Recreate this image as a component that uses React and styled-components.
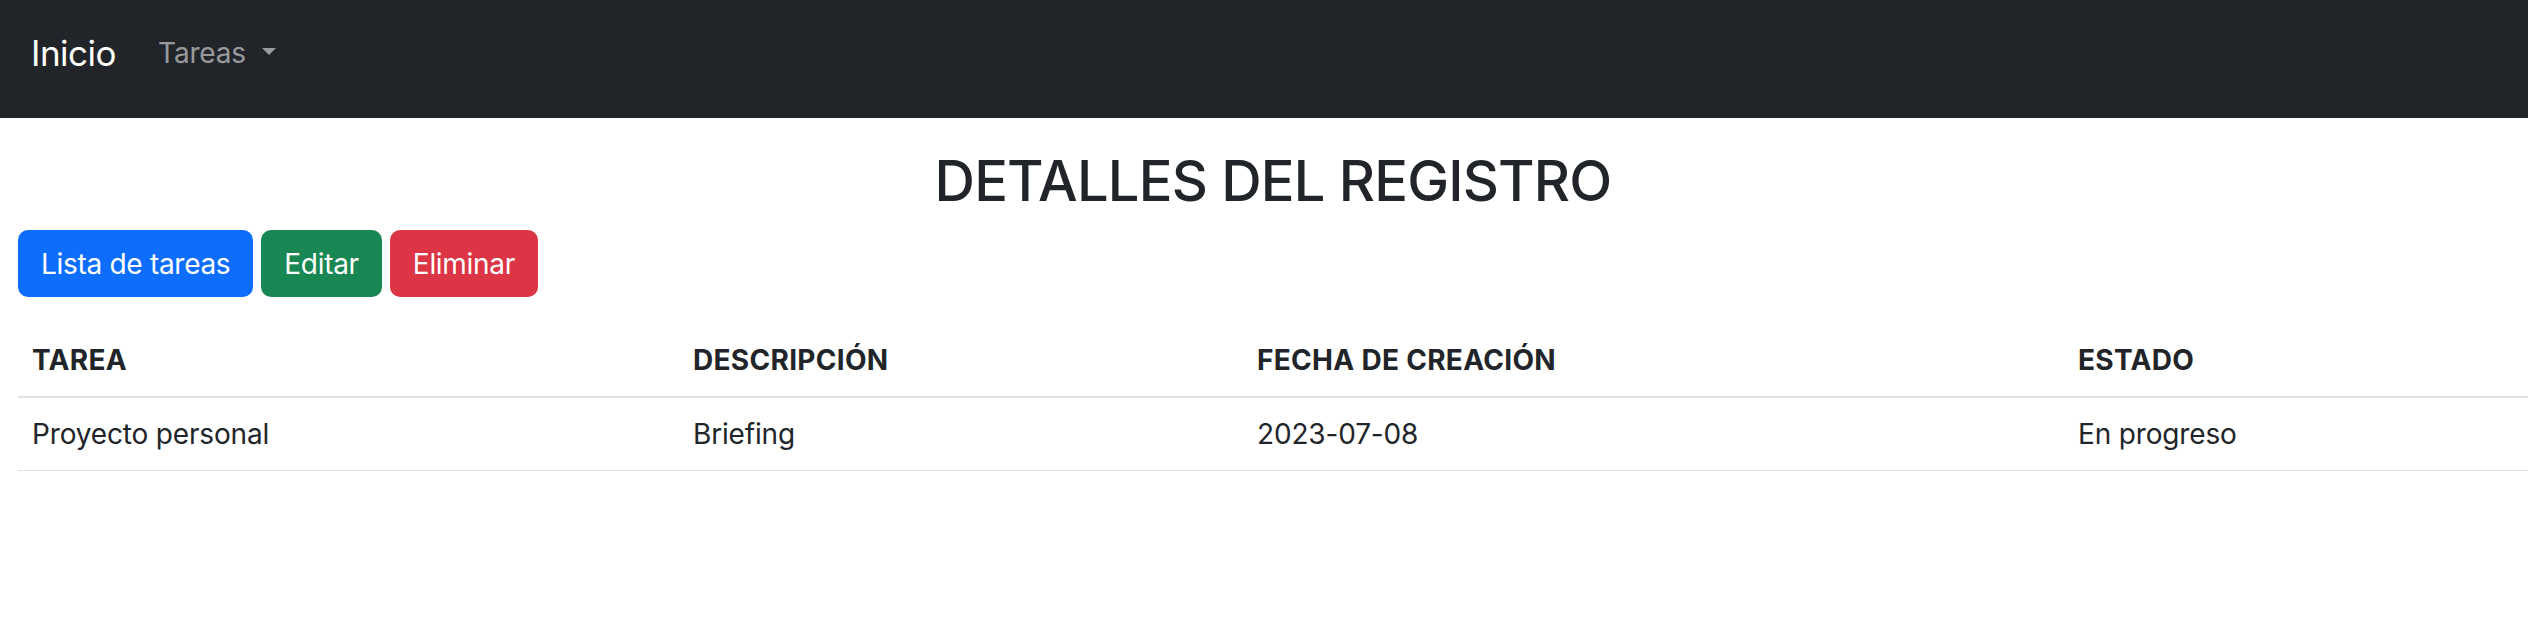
import styled, { createGlobalStyle } from "styled-components";

const GlobalStyle = createGlobalStyle`
    body {
        margin: 0;
        font-family: Inter, "Noto Sans", sans-serif;
        letter-spacing: -0.01em;
        color: #212529;
        background-color: #FFFFFF;
    }
`;

const tasks = [
    { name: "Proyecto personal", description: "Briefing", created: "2023-07-08", status: "En progreso" }
];

export default function App() {
    return (
        <>
            <GlobalStyle />
            <NavBar>
                <Brand>Inicio</Brand>
                <DropdownToggle>Tareas</DropdownToggle>
            </NavBar>
            <Main>
                <Title>DETALLES DEL REGISTRO</Title>
                <Actions>
                    <Button color="#0d6efd">Lista de tareas</Button>
                    <Button color="#198754">Editar</Button>
                    <Button color="#dc3545">Eliminar</Button>
                </Actions>
                <Table>
                    <colgroup>
                        <Col width="661px" />
                        <Col width="564px" />
                        <Col width="821px" />
                        <Col />
                    </colgroup>
                    <thead>
                        <tr>
                            <th>TAREA</th>
                            <th>DESCRIPCIÓN</th>
                            <th>FECHA DE CREACIÓN</th>
                            <th>ESTADO</th>
                        </tr>
                    </thead>
                    <tbody>
                        {tasks.map((task) => (
                            <tr key={task.name}>
                                <td>{task.name}</td>
                                <td>{task.description}</td>
                                <td>{task.created}</td>
                                <td>{task.status}</td>
                            </tr>
                        ))}
                    </tbody>
                </Table>
            </Main>
        </>
    );
}

const NavBar = styled.nav`
    background-color: #212529;
    display: flex;
    align-items: center;
    box-sizing: border-box;
    height: 118px;
    padding: 0 0 12px 31px;
`;

const Brand = styled.a`
    color: #FFFFFF;
    font-size: 35px;
    line-height: 1.5;
    letter-spacing: -0.5px;
    margin-right: 42px;
    cursor: pointer;
`;

const DropdownToggle = styled.a`
    color: rgba(255, 255, 255, 0.55);
    font-size: 28px;
    line-height: 1.5;
    cursor: pointer;

    &::after {
        content: "";
        display: inline-block;
        margin-left: 16px;
        vertical-align: 0.28em;
        border-top: 7.5px solid;
        border-left: 7.5px solid transparent;
        border-right: 7.5px solid transparent;
    }
`;

const Main = styled.main`
    padding-left: 18px;
`;

const Title = styled.h2`
    font-size: 56px;
    font-weight: 500;
    line-height: 1.2;
    letter-spacing: -0.8px;
    text-align: center;
    margin: 30px 0 15px;
`;

const Actions = styled.div`
    display: flex;
    gap: 8px;
`;

const Button = styled.button`
    background-color: ${(props) => props.color};
    color: #FFFFFF;
    font-family: inherit;
    font-size: 28px;
    letter-spacing: -0.3px;
    height: 67px;
    padding: 0 23px;
    border: none;
    border-radius: 10px;
    cursor: pointer;
`;

const Table = styled.table`
    width: 100%;
    margin-top: 27px;
    border-collapse: collapse;
    font-size: 28px;

    th, td {
        text-align: left;
        height: 72px;
        padding: 0 14px;
        border-bottom: 1px solid #dee2e6;
    }

    th {
        font-weight: 700;
        letter-spacing: 0.3px;
    }

    thead th {
        border-bottom-width: 2px;
    }
`;

const Col = styled.col`
    width: ${(props) => props.width || "auto"};
`;
